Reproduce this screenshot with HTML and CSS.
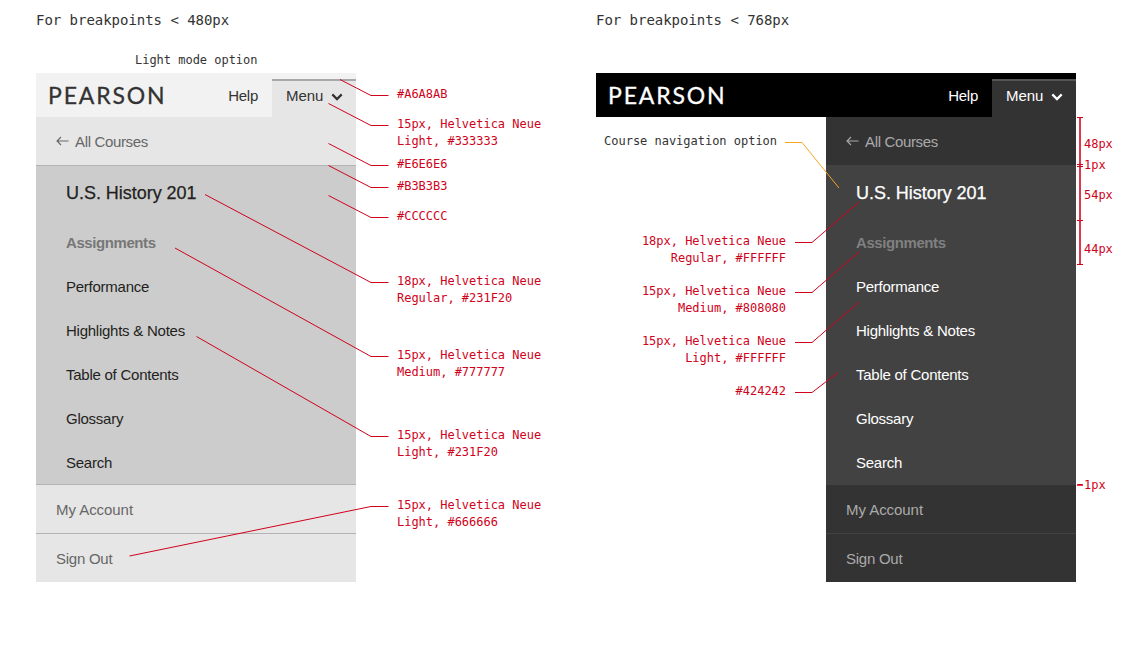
FILE: index.html
```html
<!DOCTYPE html>
<html lang="en">
<head>
<meta charset="utf-8">
<title>Pearson mobile menu specification</title>
<link rel="stylesheet" href="styles.css">
</head>
<body>
<main class="sheet">
  <section class="spec spec-light">
    <h2 class="spec-title">For breakpoints &lt; 480px</h2>
    <p class="mode-label">Light mode option</p>
    <div class="spec-body">
      <div class="device light">
        <header class="bar">
          <span class="logo">PEARSON</span>
          <a class="help">Help</a>
          <a class="menu-tab"><span>Menu</span><svg class="chevron" viewBox="0 0 12 8"><path d="M1.3 1.4 6 6.1 10.7 1.4"/></svg></a>
        </header>
        <nav class="drawer">
          <a class="row back"><svg class="arrow" viewBox="0 0 13 10"><path d="M12.5 5H1M5 1 1 5l4 4"/></svg><span class="t-back">All Courses</span></a>
          <div class="course">
            <h3 class="course-title">U.S. History 201</h3>
            <a class="item current">Assignments</a>
            <a class="item">Performance</a>
            <a class="item">Highlights &amp; Notes</a>
            <a class="item">Table of Contents</a>
            <a class="item">Glossary</a>
            <a class="item">Search</a>
          </div>
          <a class="row account">My Account</a>
          <a class="row">Sign Out</a>
        </nav>
      </div>
      <div class="notes notes-light">
        <p class="n1">#A6A8AB</p>
        <p class="n2">15px, Helvetica Neue<br>Light, #333333</p>
        <p class="n3">#E6E6E6</p>
        <p class="n4">#B3B3B3</p>
        <p class="n5">#CCCCCC</p>
        <p class="n6">18px, Helvetica Neue<br>Regular, #231F20</p>
        <p class="n7">15px, Helvetica Neue<br>Medium, #777777</p>
        <p class="n8">15px, Helvetica Neue<br>Light, #231F20</p>
        <p class="n9">15px, Helvetica Neue<br>Light, #666666</p>
      </div>
    </div>
  </section>

  <section class="spec spec-dark">
    <h2 class="spec-title">For breakpoints &lt; 768px</h2>
    <div class="spec-body">
      <div class="device dark">
        <header class="bar">
          <span class="logo">PEARSON</span>
          <a class="help">Help</a>
          <a class="menu-tab"><span>Menu</span><svg class="chevron" viewBox="0 0 12 8"><path d="M1.3 1.4 6 6.1 10.7 1.4"/></svg></a>
        </header>
        <div class="dark-body">
          <div class="notes notes-dark">
            <p class="nav-option">Course navigation option</p>
            <p class="d1">18px, Helvetica Neue<br>Regular, #FFFFFF</p>
            <p class="d2">15px, Helvetica Neue<br>Medium, #808080</p>
            <p class="d2">15px, Helvetica Neue<br>Light, #FFFFFF</p>
            <p class="d2">#424242</p>
          </div>
          <nav class="drawer">
            <a class="row back"><svg class="arrow" viewBox="0 0 13 10"><path d="M12.5 5H1M5 1 1 5l4 4"/></svg><span class="t-back">All Courses</span></a>
            <div class="course">
              <h3 class="course-title">U.S. History 201</h3>
              <a class="item current">Assignments</a>
              <a class="item">Performance</a>
              <a class="item">Highlights &amp; Notes</a>
              <a class="item">Table of Contents</a>
              <a class="item">Glossary</a>
              <a class="item">Search</a>
            </div>
            <a class="row account">My Account</a>
            <a class="row">Sign Out</a>
          </nav>
        </div>
      </div>
      <div class="notes measures">
        <p class="m1">48px</p>
        <p class="m2">1px</p>
        <p class="m3">54px</p>
        <p class="m4">44px</p>
        <p class="m5">1px</p>
      </div>
    </div>
  </section>

  <svg class="leaders" viewBox="0 0 1144 645">
    <g class="red">
      <path d="M340 79.500 371 95.500H388.500"/>
      <path d="M328.500 103.500 371 125.500H388.500"/>
      <path d="M328.500 143.500 371 165.500H388.500"/>
      <path d="M328.500 165.500 371 187.500H388.500"/>
      <path d="M328.500 195.500 371 217.500H388.500"/>
      <path d="M205 194.500 371 282.500H388.500"/>
      <path d="M175 248 371 356.500H388.500"/>
      <path d="M196.500 336.500 371 436.500H388.500"/>
      <path d="M129.500 556 371 506.500H388.500"/>
      <path d="M795 242.500H812L859 202"/>
      <path d="M795 292.500H812L859 252"/>
      <path d="M795 342.500H812L859 302"/>
      <path d="M795 392.500H812L838 372.500"/>
    </g>
    <path class="orange" d="M785 142.500H802L839 188"/>
    <path class="axis" d="M1080 117V264"/>
    <path class="ticks" d="M1077 117.500H1083M1077 164.500H1083M1077 166.500H1083M1077 220.500H1083M1077 264.500H1083"/>
    <path class="axis" d="M1077 485H1083"/>
    <path class="ticks" d="M1078 484.500H1082"/>
  </svg>
</main>
</body>
</html>
```
FILE: styles.css
```css
* { box-sizing: border-box; }
body { margin: 0; background: #fff; }
h2, h3, p { margin: 0; font-weight: 400; }

.sheet {
  position: relative;
  display: grid;
  grid-template-columns: 560px 1fr;
  width: 1144px;
  height: 645px;
  padding: 11px 0 0 36px;
  overflow: hidden;
  font-family: "DejaVu Sans Mono", monospace;
}
.spec { display: flex; flex-direction: column; }
.spec-title { height: 18px; font-size: 14px; line-height: 18px; letter-spacing: -0.03px; color: #333; }
.mode-label { height: 17px; margin-top: 23px; padding-left: 99px; font-size: 12px; line-height: 17px; letter-spacing: -0.02px; color: #333; }
.spec-body { display: flex; margin-top: 4px; }
.spec-dark .spec-body { margin-top: 44px; }

.device { font-family: "Liberation Sans", Arial, sans-serif; font-size: 15px; letter-spacing: -0.25px; }
.light { width: 320px; }
.dark { width: 480px; }

.bar { display: flex; height: 44px; align-items: flex-start; }
.logo {
  flex: 1;
  padding-left: 12px;
  font-family: Lato, sans-serif;
  font-size: 23px;
  line-height: 45px;
  letter-spacing: 1.85px;
  -webkit-text-stroke: 0.3px currentColor;
}
.help { margin-right: 14px; line-height: 46px; }
.menu-tab {
  display: flex;
  width: 84px;
  height: 38px;
  margin-top: 6px;
  padding: 0 13px 4px 14px;
  align-items: center;
  justify-content: space-between;
  border-top: 2px solid;
  line-height: 32px;
}
.menu-tab span { height: 34px; letter-spacing: -0.1px; }
.chevron { width: 12px; height: 8px; fill: none; stroke: currentColor; stroke-width: 2.2; }

.drawer { display: flex; flex-direction: column; }
.row { display: flex; height: 48px; padding-left: 20px; align-items: center; line-height: 48px; padding-top: 2px; }
.row + .row { height: 49px; border-top: 1px solid; }
.t-back { letter-spacing: -0.35px; }
.account { letter-spacing: -0.05px; }
.arrow { width: 13px; height: 10px; margin: -3px 6px 0 0; fill: none; stroke: currentColor; stroke-width: 1.1; }
.course { display: flex; flex-direction: column; height: 320px; padding-left: 30px; border: solid; border-width: 1px 0; }
.course-title { height: 54px; font-size: 18px; line-height: 54px; letter-spacing: -0.03px; -webkit-text-stroke: 0.25px currentColor; }
.item { height: 44px; line-height: 46px; }
.current { font-weight: 700; letter-spacing: -0.42px; }

.light .bar { background: #f2f2f2; color: #333; }
.light .menu-tab { background: #e6e6e6; border-color: #a6a8ab; }
.light .drawer { background: #e6e6e6; color: #666; }
.light .row { border-color: #b3b3b3; }
.light .course { background: #ccc; border-color: #b3b3b3; color: #231f20; }
.light .current { color: #777; }

.dark .bar { background: #000; color: #fff; }
.dark .menu-tab { background: #333; border-color: #555; }
.dark-body { display: flex; }
.dark .drawer { width: 250px; background: #333; color: #aaa; }
.dark .row { border-color: #424242; }
.dark .course { background: #424242; border-color: #424242; color: #fff; }
.dark .current { color: #808080; }

.notes {
  display: flex;
  flex-direction: column;
  font-family: "DejaVu Sans Mono", monospace;
  font-size: 12px;
  line-height: 17px;
  letter-spacing: -0.02px;
  color: #d0021b;
  white-space: nowrap;
}
.notes-light { padding-left: 41px; }
.n1 { margin-top: 13px; }
.n2 { margin-top: 13px; }
.n3 { margin-top: 6px; }
.n4 { margin-top: 5px; }
.n5 { margin-top: 13px; }
.n6 { margin-top: 48px; }
.n7 { margin-top: 40px; }
.n8 { margin-top: 46px; }
.n9 { margin-top: 36px; }

.notes-dark { width: 230px; padding-right: 40px; text-align: right; }
.nav-option { margin: 16px 9px 0 0; color: #333; }
.d1 { margin-top: 83px; }
.d2 { margin-top: 16px; }

.measures { padding-left: 8px; }
.m1 { margin-top: 63px; }
.m2 { margin-top: 4px; }
.m3 { margin-top: 13px; }
.m4 { margin-top: 37px; }
.m5 { margin-top: 219px; }

.leaders { position: absolute; inset: 0; width: 1144px; height: 645px; fill: none; }
.red { stroke: #d0021b; }
.orange { stroke: #f5a623; }
.axis { stroke: #e2354b; stroke-width: 2; }
.ticks { stroke: #d0021b; }
```
